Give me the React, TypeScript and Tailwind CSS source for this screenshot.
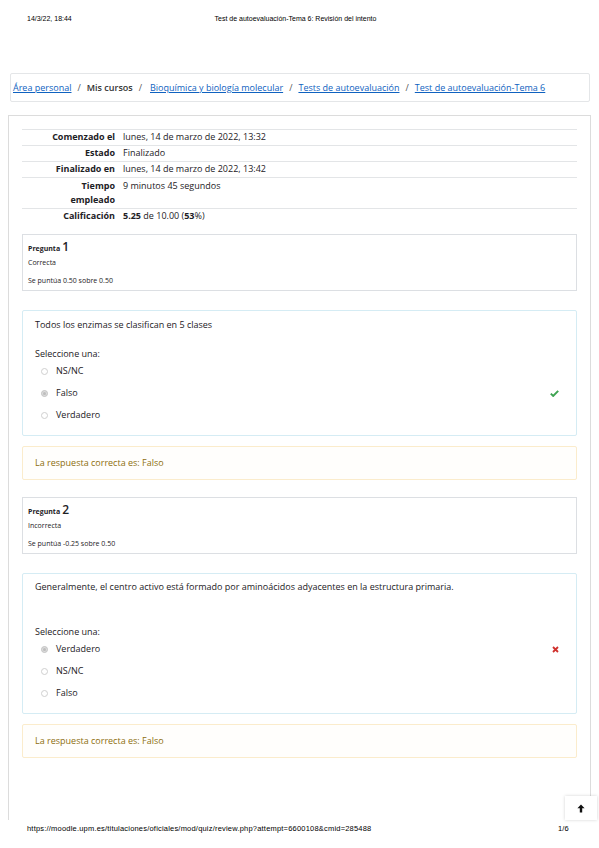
import React from "react";

const body = "font-['Open_Sans','Noto_Sans',sans-serif]";

function Radio({ checked }: { checked?: boolean }) {
  return checked ? (
    <span className="flex h-[7px] w-[7px] items-center justify-center rounded-full border border-[#c4c4c4] bg-[#dcdcdc]">
      <span className="h-[3px] w-[3px] rounded-full bg-[#bdbdbd]" />
    </span>
  ) : (
    <span className="h-[7px] w-[7px] rounded-full border border-[#cfcfcf] bg-white" />
  );
}

function Check() {
  return (
    <svg width="9" height="7" viewBox="0 0 9 7" className="block">
      <path d="M0.8 3.6 L3.2 5.9 L8.2 0.9" fill="none" stroke="#3fa452" strokeWidth="2" />
    </svg>
  );
}

function Cross() {
  return (
    <svg width="7" height="7" viewBox="0 0 7 7" className="block">
      <path d="M1 1 L6 6 M6 1 L1 6" fill="none" stroke="#d0312d" strokeWidth="1.8" />
    </svg>
  );
}

type Opt = { label: string; checked?: boolean; mark?: "ok" | "bad" };

function Options({ opts }: { opts: Opt[] }) {
  return (
    <div className="flex flex-col">
      {opts.map((o) => (
        <div key={o.label} className="flex h-[22px] items-center pl-[18px] pr-[17px]">
          <Radio checked={o.checked} />
          <span className="ml-[8px] text-[9px] leading-[12px] text-[#1d2125]">{o.label}</span>
          {o.mark && <span className="ml-auto">{o.mark === "ok" ? <Check /> : <Cross />}</span>}
        </div>
      ))}
    </div>
  );
}

function InfoBox({ n, state, score }: { n: number; state: string; score: string }) {
  return (
    <div className="border border-[#dcdfe3] bg-white pl-[5px] pt-[5px] pb-[4px] text-[#1d2125]">
      <div className="flex items-baseline leading-[14px]">
        <span className="text-[7px] font-bold">Pregunta</span>
        <span className="ml-[2px] text-[12px] font-semibold">{n}</span>
      </div>
      <div className="mt-[2px] text-[7px] leading-[10px]">{state}</div>
      <div className="mt-[8px] text-[7px] leading-[10px]">{score}</div>
    </div>
  );
}

function Feedback() {
  return (
    <div className="rounded-[2px] border border-[#fbeccc] bg-[#fffefc] pl-[12px] pt-[10px] pb-[10px] text-[9px] leading-[12px] text-[#8d6e0f]">
      La respuesta correcta es: Falso
    </div>
  );
}

const rows: [string, React.ReactNode, boolean?][] = [
  ["Comenzado el", "lunes, 14 de marzo de 2022, 13:32"],
  ["Estado", "Finalizado"],
  ["Finalizado en", "lunes, 14 de marzo de 2022, 13:42"],
  ["Tiempo empleado", "9 minutos 45 segundos", true],
  [
    "Calificación",
    <>
      <b>5.25</b> de 10.00 (<b>53</b>%)
    </>,
  ],
];

export default function App() {
  return (
    <div className={`relative h-[848px] w-[599px] overflow-hidden bg-white ${body}`}>
      {/* Print header */}
      <header className="grid h-[40px] grid-cols-[1fr_auto_1fr] items-start px-[27px] pt-[14px] font-['Liberation_Sans',Arial,sans-serif] text-[7px] leading-[10px] text-black">
        <span>14/3/22, 18:44</span>
        <span className="-ml-[8px]">Test de autoevaluación-Tema 6: Revisión del intento</span>
        <span />
      </header>

      {/* Breadcrumb */}
      <nav className="mx-[10px] mt-[33px] flex h-[29px] w-[580px] items-center rounded-[2px] border border-[#e4e6e8] pl-[2px] text-[9px] text-[#1d2125]">
        <a className="text-[#0f62c0] underline">Área personal</a>
        <span className="mx-[6px] text-[#555]">/</span>
        <span className="font-semibold text-[#333]">Mis cursos</span>
        <span className="mx-[6px] text-[#555]">/</span>
        <a className="ml-[2px] text-[#0f62c0] underline">Bioquímica y biología molecular</a>
        <span className="mx-[6px] text-[#555]">/</span>
        <a className="text-[#0f62c0] underline">Tests de autoevaluación</a>
        <span className="mx-[6px] text-[#555]">/</span>
        <a className="text-[#0f62c0] underline">Test de autoevaluación-Tema 6</a>
      </nav>

      {/* Main card */}
      <main className="ml-[8px] mt-[13px] w-[583px] border border-b-0 border-[#dcdcdc] pb-[62px] pl-[13px] pr-[13px] pt-[13px]">
        <table className="w-full border-collapse text-[9px] text-[#1d2125]">
          <tbody>
            {rows.map(([k, v, two]) => (
              <tr key={k} className="border-t border-[#e3e5e7] align-top">
                <th className={`w-[93px] pb-[1px] text-right font-bold leading-[14px] ${two ? "pt-[1px]" : ""}`}>
                  {two ? (
                    <>
                      Tiempo
                      <br />
                      empleado
                    </>
                  ) : (
                    k
                  )}
                </th>
                <td className={`pb-[1px] pl-[8px] leading-[14px] ${two ? "pt-[1px]" : ""}`}>{v}</td>
              </tr>
            ))}
          </tbody>
        </table>

        <div className="mt-[10px]">
          <InfoBox n={1} state="Correcta" score="Se puntúa 0.50 sobre 0.50" />
        </div>

        <div className="mt-[19px] rounded-[2px] border border-[#d5ecf4] pt-[8px] pb-[9px]">
          <p className="pl-[12px] text-[9px] leading-[12px] text-[#1d2125]">
            Todos los enzimas se clasifican en 5 clases
          </p>
          <p className="mt-[17px] pl-[12px] text-[9px] leading-[12px] text-[#1d2125]">Seleccione una:</p>
          <Options
            opts={[
              { label: "NS/NC" },
              { label: "Falso", checked: true, mark: "ok" },
              { label: "Verdadero" },
            ]}
          />
        </div>

        <div className="mt-[10px]">
          <Feedback />
        </div>

        <div className="mt-[17px]">
          <InfoBox n={2} state="Incorrecta" score="Se puntúa -0.25 sobre 0.50" />
        </div>

        <div className="mt-[19px] rounded-[2px] border border-[#d5ecf4] pt-[7px] pb-[9px]">
          <p className="pl-[12px] text-[9px] leading-[12px] text-[#1d2125]">
            Generalmente, el centro activo está formado por aminoácidos adyacentes en la estructura primaria.
          </p>
          <p className="mt-[33px] pl-[12px] text-[9px] leading-[12px] text-[#1d2125]">Seleccione una:</p>
          <Options
            opts={[
              { label: "Verdadero", checked: true, mark: "bad" },
              { label: "NS/NC" },
              { label: "Falso" },
            ]}
          />
        </div>

        <div className="mt-[10px]">
          <Feedback />
        </div>
      </main>

      {/* Back to top button */}
      <button className="absolute left-[565px] top-[796px] flex h-[24px] w-[32px] items-center justify-center bg-white shadow-[0_0_3px_rgba(0,0,0,0.18)]">
        <svg width="8" height="9" viewBox="0 0 8 9">
          <path d="M4 0.5 L7.6 4.2 L5.2 4.2 L5.2 8.6 L2.8 8.6 L2.8 4.2 L0.4 4.2 Z" fill="#111" />
        </svg>
      </button>

      {/* Print footer */}
      <footer className="mt-[4px] flex justify-between pl-[27px] pr-[30px] font-['Liberation_Sans',Arial,sans-serif] text-[7.5px] leading-[10px] tracking-[0.2px] text-black">
        <span>https://moodle.upm.es/titulaciones/oficiales/mod/quiz/review.php?attempt=6600108&amp;cmid=285488</span>
        <span>1/6</span>
      </footer>
    </div>
  );
}
